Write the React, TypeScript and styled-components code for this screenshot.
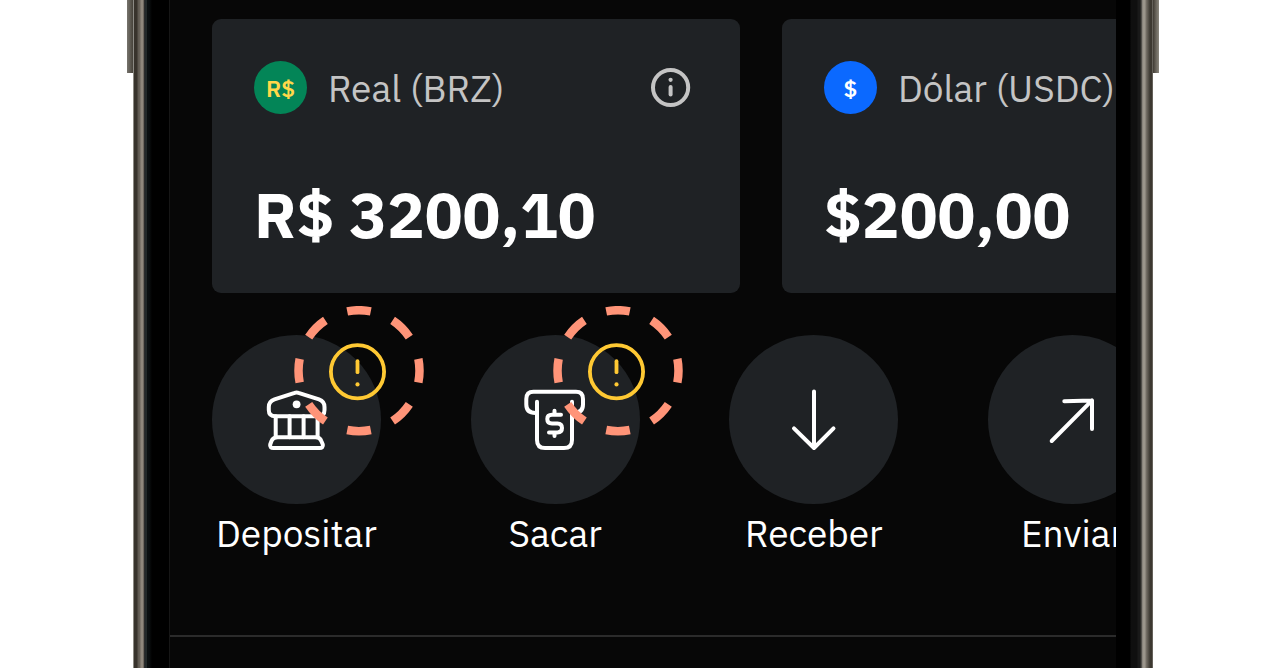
import React from "react";
import styled, { createGlobalStyle } from "styled-components";

const GlobalStyle = createGlobalStyle`
  * { box-sizing: border-box; }
  body {
    margin: 0;
    background: #fff;
    font-family: "IBM Plex Sans", Roboto, "Liberation Sans", sans-serif;
  }
`;

const Stage = styled.main`
  display: grid;
  grid-template-columns: 6px minmax(0, 1fr) 6px;
  width: 100%;
  max-width: 1032px;
  min-height: 100vh;
  margin: 0 auto;
`;

const SideKey = styled.span<{ $side: "left" | "right" }>`
  height: 73px;
  background: ${({ $side }) =>
    $side === "left"
      ? "linear-gradient(90deg, #77746d, #5b574f 60%, #46423a)"
      : "linear-gradient(90deg, #3f3a33, #68635a 50%, #8b877e)"};
`;

const Phone = styled.div`
  display: grid;
  grid-template-columns: 14px 22px minmax(0, 1fr) 24px 13px;
  background: #000;
`;

const Rail = styled.span<{ $side: "left" | "right" }>`
  background: ${({ $side }) =>
    $side === "left"
      ? "linear-gradient(90deg, #8c8a84 0 1px, #38332c 1px 4px, #5d574f 5px, #6a645b 7px, #8f877c 8px 10px, #4c4842 11px, #0b1015 12px, #39403f 13px, #0d1213 14px)"
      : "linear-gradient(90deg, #2a2926 0 1px, #77736d 2px, #9b958b 3px 5px, #79736a 6px, #5b564e 8px, #3d3932 10px, #3c372f 12px, #8c8a84 13px)"};
`;

const Bezel = styled.span<{ $side: "left" | "right" }>`
  background: ${({ $side }) =>
    $side === "left"
      ? "linear-gradient(90deg, #0b0f10 0 2px, #000 5px)"
      : "linear-gradient(270deg, #191919 0 2px, #0f0f0f 3px 9px, #000 10px)"};
`;

const Screen = styled.div`
  display: flex;
  flex-direction: column;
  overflow: hidden;
  padding-top: 19px;
  background: #070707;
  border-left: 1px solid #161616;
`;

const Balances = styled.section`
  display: flex;
  gap: 42px;
  padding-left: 42px;
`;

const Card = styled.article`
  display: flex;
  flex: 0 0 528px;
  flex-direction: column;
  justify-content: space-between;
  min-height: 274px;
  padding: 42px;
  border-radius: 9px;
  background: #1f2225;
`;

const CardHeader = styled.header`
  display: flex;
  align-items: center;
  gap: 21px;
`;

const Coin = styled.span<{ $background: string; $color: string }>`
  display: flex;
  flex: none;
  align-items: center;
  justify-content: center;
  width: 53px;
  height: 53px;
  border-radius: 50%;
  background: ${({ $background }) => $background};
  color: ${({ $color }) => $color};
  font-size: 23px;
  font-weight: 600;
`;

const CurrencyName = styled.h2`
  flex: 1;
  margin: 0;
  color: #c4c4c4;
  font-size: 37px;
  font-weight: 400;
  line-height: 48px;
  white-space: nowrap;
`;

const InfoButton = styled.button`
  display: flex;
  padding: 0;
  border: 0;
  background: none;
  color: #c4c4c4;
`;

const Amount = styled.p`
  margin: 0;
  color: #fff;
  font-size: 63px;
  font-weight: 700;
  line-height: 74px;
  white-space: nowrap;
`;

const Actions = styled.nav`
  display: flex;
  justify-content: space-between;
  min-width: 945px;
  margin: 42px -41px 78px 42px;
`;

const ActionButton = styled.button`
  position: relative;
  display: flex;
  flex: 0 0 169px;
  flex-direction: column;
  align-items: center;
  gap: 5px;
  padding: 0;
  border: 0;
  background: none;
  color: #fff;
  font-family: inherit;
  font-size: 37px;
  font-weight: 400;
  line-height: 48px;
`;

const Disc = styled.span`
  display: flex;
  align-items: center;
  justify-content: center;
  width: 169px;
  height: 169px;
  border-radius: 50%;
  background: #1f2225;
`;

const Warning = styled.svg`
  position: absolute;
  top: -29px;
  left: 82px;
`;

const Divider = styled.hr`
  width: 100%;
  height: 2px;
  margin: 0;
  border: 0;
  background: #2b2b2b;
`;

const InfoIcon = () => (
  <svg width="53" height="53" viewBox="0 0 53 53" fill="none" stroke="currentColor" strokeWidth="4" strokeLinecap="round" aria-hidden="true">
    <circle cx="25.6" cy="26.5" r="17.6" />
    <path d="M25.600 26v7.600" />
    <circle cx="25.6" cy="18.8" r="2.1" fill="currentColor" stroke="none" />
  </svg>
);

const WarningMark = () => (
  <Warning width="130" height="130" viewBox="0 0 130 130" fill="none" role="img" aria-label="Atenção">
    <circle cx="65" cy="64.7" r="60.5" stroke="#ff9478" strokeWidth="8.5" pathLength={16} strokeDasharray="1 1" strokeDashoffset="0.5" />
    <g stroke="#ffc933" strokeWidth="3.8">
      <circle cx="63.5" cy="65.8" r="26.6" />
      <path d="M63.5 55.2v11" strokeLinecap="round" />
      <circle cx="63.5" cy="78.4" r="2.1" fill="#ffc933" stroke="none" />
    </g>
  </Warning>
);

const ActionIcon = ({ children }: { children: React.ReactNode }) => (
  <svg width="64" height="64" viewBox="0 0 64 64" fill="none" stroke="currentColor" strokeWidth="4" strokeLinecap="round" strokeLinejoin="round" aria-hidden="true">
    {children}
  </svg>
);

const balances = [
  { name: "Real (BRZ)", symbol: "R$", amount: "R$ 3200,10", background: "#038557", color: "#ffd84a" },
  { name: "Dólar (USDC)", symbol: "$", amount: "$200,00", background: "#0b69ff", color: "#fff" },
];

const actions = [
  {
    label: "Depositar",
    warning: true,
    icon: (
      <>
        <path d="M29.7 4.9 9.5 11.4Q3.8 13.4 3.8 19v3Q3.8 28.3 10.5 28.3H53Q59.5 28.3 59.5 22v-3Q59.5 13.4 54 11.4L33.5 4.9Q31.6 4.2 29.7 4.9Z" />
        <circle cx="31.6" cy="16.3" r="3.9" fill="currentColor" stroke="none" />
        <path d="M10.7 28.3v21M24.6 28.3v21M38.6 28.3v21M52.6 28.3v21" />
        <path d="M13 49.3H50.5Q55 49.3 56.3 53L57.8 56.5Q58.5 60 54.5 60H8.5Q4.5 60 5.2 56.5L6.5 53Q8 49.3 13 49.3Z" />
      </>
    ),
  },
  {
    label: "Sacar",
    warning: true,
    icon: (
      <>
        <path d="M12.5 25Q3.3 25 3.3 16.5V11Q3.3 3.7 10.5 3.7H53Q60 3.7 60 11v5.5Q60 25 50.5 25" />
        <path d="M14 13.7V52Q14 60 22 60H41Q49 60 49 52V13.7" />
        <path d="M38 26.7H29Q24.3 26.7 24.3 31Q24.3 35.5 29 35.5H34.5Q39 35.5 39 40Q39 44.4 34.5 44.4H26M31.5 22.7v4M31.5 44.4v3.6" />
      </>
    ),
  },
  {
    label: "Receber",
    warning: false,
    icon: <path d="M32 3.5V60M12 40.3 32 60 51.5 40.3" />,
  },
  {
    label: "Enviar",
    warning: false,
    icon: <path d="M11.7 53 52 12.4M24.3 13.3 52 12.4V41" />,
  },
];

export default function App() {
  return (
    <>
      <GlobalStyle />
      <Stage>
        <SideKey $side="left" />
        <Phone>
          <Rail $side="left" />
          <Bezel $side="left" />
          <Screen>
            <Balances>
              {balances.map((b) => (
                <Card key={b.name}>
                  <CardHeader>
                    <Coin $background={b.background} $color={b.color}>{b.symbol}</Coin>
                    <CurrencyName>{b.name}</CurrencyName>
                    <InfoButton type="button" aria-label={`Informações sobre ${b.name}`}>
                      <InfoIcon />
                    </InfoButton>
                  </CardHeader>
                  <Amount>{b.amount}</Amount>
                </Card>
              ))}
            </Balances>
            <Actions>
              {actions.map((a) => (
                <ActionButton key={a.label} type="button">
                  <Disc>
                    <ActionIcon>{a.icon}</ActionIcon>
                  </Disc>
                  {a.label}
                  {a.warning && <WarningMark />}
                </ActionButton>
              ))}
            </Actions>
            <Divider />
          </Screen>
          <Bezel $side="right" />
          <Rail $side="right" />
        </Phone>
        <SideKey $side="right" />
      </Stage>
    </>
  );
}
